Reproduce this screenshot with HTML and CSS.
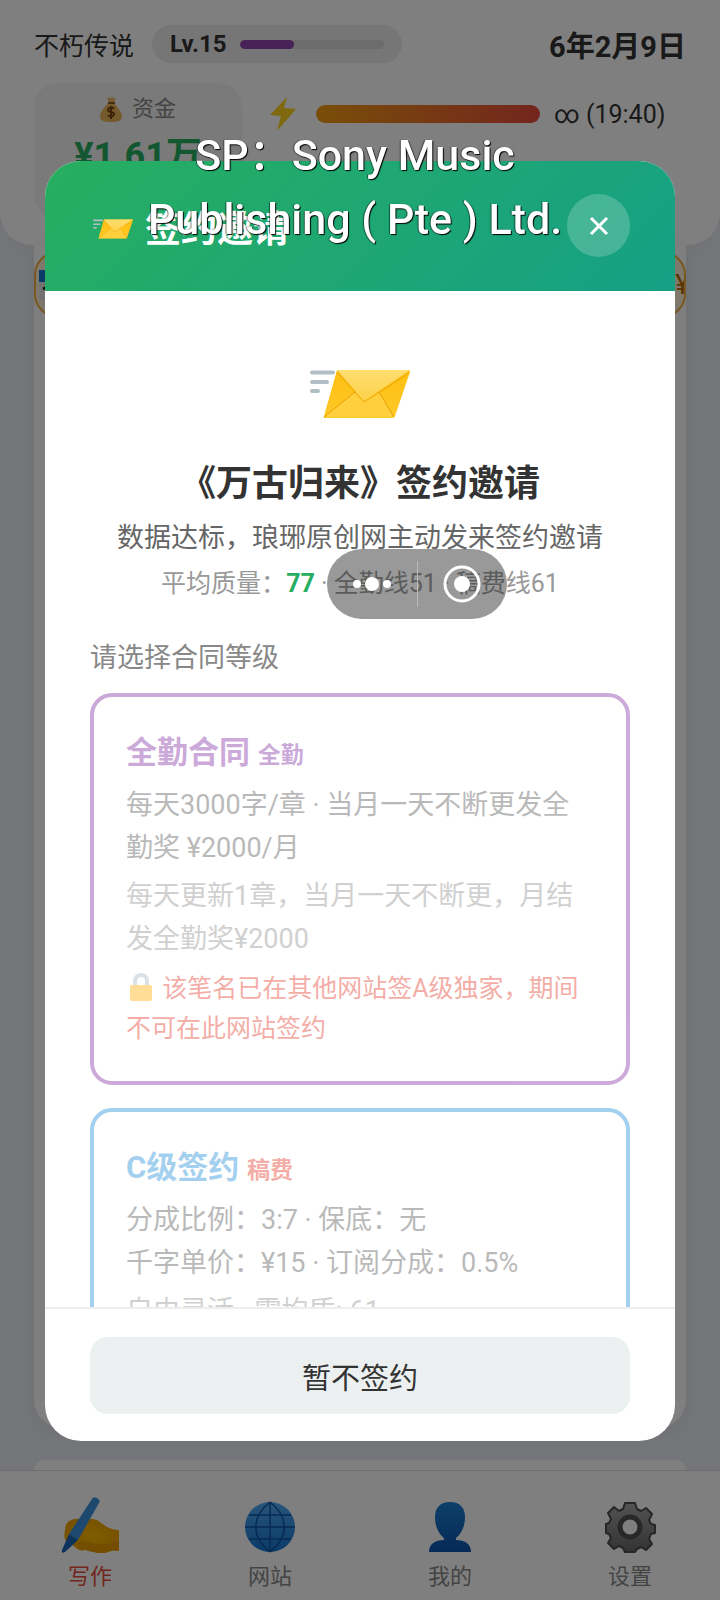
FILE: index.html
```
<!DOCTYPE html>
<html lang="zh-CN">
<head>
    <meta charset="UTF-8">
    <meta name="viewport" content="width=device-width, initial-scale=1.0">
    <title>签约邀请</title>
    <link rel="stylesheet" href="styles.css">
</head>
<body>
    <svg class="defs" aria-hidden="true">
        <defs>
            <linearGradient id="flap" x1="0" y1="0" x2="0" y2="1">
                <stop offset="0" stop-color="#ffdf70"/>
                <stop offset="1" stop-color="#fdd04a"/>
            </linearGradient>
            <linearGradient id="paper" x1="0" y1="0" x2="0" y2="1">
                <stop offset="0" stop-color="#fdbf12"/>
                <stop offset="1" stop-color="#ffc928"/>
            </linearGradient>
            <linearGradient id="globe" x1="0" y1="0" x2="0" y2="1">
                <stop offset="0" stop-color="#50aaf5"/>
                <stop offset="1" stop-color="#1576d2"/>
            </linearGradient>
            <linearGradient id="person" x1="0" y1="0" x2="0" y2="1">
                <stop offset="0" stop-color="#1c80d4"/>
                <stop offset="1" stop-color="#0c54ae"/>
            </linearGradient>
            <linearGradient id="gear" x1="0" y1="0" x2="0" y2="1">
                <stop offset="0" stop-color="#a6a6a6"/>
                <stop offset="1" stop-color="#686868"/>
            </linearGradient>
            <radialGradient id="hand">
                <stop offset="0" stop-color="#ffb900"/>
                <stop offset="1" stop-color="#f0a400"/>
            </radialGradient>
            <symbol id="envelope" viewBox="0 0 100 50">
                <path d="M2 3.5h21M2 13h15M2 22h6" stroke="#b0bec5" stroke-width="4" stroke-linecap="round"/>
                <path d="M27 1h72q1 0 1 2L85 47q-1 2-2 2H15q-2 0-1-2z" fill="url(#paper)"/>
                <path d="M14 48l31-25 10 7 14-7 15 25z" fill="#ffcf3d"/>
                <path d="M14 48l31-25M69 23l15 25" stroke="#e5a000" fill="none"/>
                <path d="M27 1h73L54 32z" fill="url(#flap)"/>
                <path d="M27 3l27 30L99 4" stroke="#eda500" fill="none"/>
            </symbol>
        </defs>
    </svg>

    <div class="app">
        <header class="status">
            <div class="status-row">
                <span class="rank">不朽传说</span>
                <div class="level">
                    <b>Lv.15</b>
                    <div class="level-bar"><div class="level-fill"></div></div>
                </div>
                <span class="date">6年2月9日</span>
            </div>
            <div class="stats">
                <div class="money">
                    <div class="money-label">
                        <svg class="bag-icon" viewBox="0 0 22 26">
                            <path d="M7 1l3 1 2-1 2 1 2-1-2 6H9z" fill="#e9b866"/>
                            <path d="M8 7h6c3 4 8 9 8 13 0 5-4 6-11 6S0 25 0 20C0 16 5 11 8 7z" fill="#eab55c"/>
                            <path d="M8 7h7" stroke="#8a5a20" stroke-width="2"/>
                            <path d="M14 13c-1-2-6-2-6 1s6 1 6 4-5 3-6 1M11 10v13" fill="none" stroke="#7b4712" stroke-width="2"/>
                        </svg>
                        资金
                    </div>
                    <div class="money-value">¥1.61万</div>
                </div>
                <div class="energy">
                    <svg class="bolt-icon" viewBox="0 0 26 34"><path d="M17 0L0 18l11 1L7 34 26 12l-12-1z" fill="#fdd21c"/></svg>
                    <div class="energy-bar"></div>
                    <span>∞ (19:40)</span>
                </div>
            </div>
        </header>
        <main class="work">
            <div class="notice">
                <svg class="calendar-icon" viewBox="0 0 30 30">
                    <path d="M0 0h30v30H0z" fill="#e4e4e8"/>
                    <path d="M0 0h30v12H0z" fill="#1976d2"/>
                    <path d="M4 19l4-2v10" stroke="#222" stroke-width="3" fill="none"/>
                </svg>
                <span>¥</span>
            </div>
        </main>
        <section class="next"></section>
        <nav class="tabs">
            <button class="tab active">
                <svg viewBox="0 0 58 58">
                    <path d="M4 34c0-7 4-10 10-11 8-1 15-1 22 1l10 7c4 2 8 3 12 3v21c-8-2-10 2-17 2-8 0-11-2-17-3-7 2-9-3-13-5C5 47 2 43 4 34z" fill="url(#hand)"/>
                    <path d="M15 47c8-4 14 0 23 1s12-2 20-3v10c-8-2-10 2-17 2-8 0-11-2-17-3-5 1-7-3-9-7z" fill="#db8e00" opacity=".5"/>
                    <path d="M31 3q1-3 5-1t2 5L17 44l-9-6z" fill="#3b93dd"/>
                    <path d="M8 38l9 6L4 56q-4 2-3-2z" fill="#1766b8"/>
                </svg>
                写作
            </button>
            <button class="tab">
                <svg viewBox="0 0 58 58">
                    <circle cx="29" cy="31" r="25" fill="url(#globe)"/>
                    <path d="M29 6v50M4 31h50M8 19h42M8 43h42M29 6c-19 15-19 35 0 50M29 6c19 15 19 35 0 50" fill="none" stroke="#0f55a5" stroke-width="1.5"/>
                </svg>
                网站
            </button>
            <button class="tab">
                <svg viewBox="0 0 58 58">
                    <path d="M29 6c10 0 15 6 15 15 0 11-5 18-9 21v2c9 0 15 4 15 12H8c0-8 6-12 15-12v-2c-4-3-9-10-9-21 0-9 5-15 15-15z" fill="url(#person)"/>
                </svg>
                我的
            </button>
            <button class="tab">
                <svg viewBox="0 0 58 58">
                    <g fill="url(#gear)" stroke="#4c4c4c" stroke-width="2" stroke-linejoin="round">
                        <path fill-rule="evenodd" d="M24 7h10l2 6 4 2 5-3 6 6-3 6 2 4 4 1v8l-4 1-2 5 3 5-6 6-5-3-4 2-2 3H24l-2-4-4-2-5 3-6-6 3-5-2-4-3-1v-9l3-1 2-4-3-6 6-6 5 4 4-2zM29 22a9 9 0 1 0 0 18 9 9 0 0 0 0-18z"/>
                    </g>
                    <circle cx="29" cy="31" r="10" fill="none" stroke="#505050" stroke-width="5"/>
                </svg>
                设置
            </button>
        </nav>
    </div>

    <div class="overlay">
        <div class="modal" role="dialog" aria-labelledby="modal-title">
            <div class="modal-header">
                <h2 id="modal-title"><svg class="envelope-small"><use href="#envelope"/></svg>签约邀请</h2>
                <button class="close" aria-label="关闭">
                    <svg viewBox="0 0 20 20"><path d="M2 2l16 16M18 2L2 18" stroke="#fff" stroke-width="3"/></svg>
                </button>
            </div>
            <div class="modal-body">
                <svg class="envelope-large"><use href="#envelope"/></svg>
                <h3>《万古归来》签约邀请</h3>
                <p class="intro">数据达标，琅琊原创网主动发来签约邀请</p>
                <p class="quality">平均质量：<b>77</b> · 全勤线51 · 稿费线61</p>
                <p class="choose">请选择合同等级</p>

                <div class="contract full">
                    <h4>全勤合同 <small>全勤</small></h4>
                    <p class="terms">每天3000字/章 · 当月一天不断更发全勤奖 ¥2000/月</p>
                    <p class="desc">每天更新1章，当月一天不断更，月结发全勤奖¥2000</p>
                    <p class="locked">
                        <svg class="lock-icon" viewBox="0 0 22 28">
                            <path d="M5 14V8a6 6 0 0 1 12 0v6" fill="none" stroke="#b0bec5" stroke-width="4"/>
                            <rect y="12" width="22" height="16" rx="2" fill="#ffb618"/>
                        </svg>
                        该笔名已在其他网站签A级独家，期间不可在此网站签约
                    </p>
                </div>

                <div class="contract grade-c">
                    <h4>C级签约 <small>稿费</small></h4>
                    <p class="terms">分成比例：3:7 · 保底：无<br>千字单价：¥15 · 订阅分成：0.5%</p>
                    <p class="desc">自由灵活 · 需均质≥61</p>
                </div>
            </div>
            <div class="modal-footer">
                <button class="decline">暂不签约</button>
            </div>
        </div>
    </div>

    <div class="caption">SP：Sony Music<br>Publishing ( Pte ) Ltd.</div>

    <div class="capsule">
        <button aria-label="更多">
            <svg viewBox="0 0 38 38"><g fill="#fff"><circle cx="4" cy="19" r="4"/><circle cx="19" cy="19" r="7"/><circle cx="34" cy="19" r="4"/></g></svg>
        </button>
        <button aria-label="退出">
            <svg viewBox="0 0 38 38"><circle cx="19" cy="19" r="17" fill="none" stroke="#fff" stroke-width="3"/><circle cx="19" cy="19" r="8" fill="#fff"/></svg>
        </button>
    </div>
</body>
</html>
```
FILE: styles.css
```
* {
    box-sizing: border-box;
}

body {
    margin: 0;
    font-family: Roboto, "Noto Sans CJK SC", sans-serif;
    color: #333;
    background: #ebedf2;
}

h2, h3, h4, p {
    margin: 0;
}

button {
    font-family: inherit;
    border: none;
    cursor: pointer;
}

.defs {
    position: absolute;
    width: 0;
    height: 0;
}

/* Page behind the dialog */
.app {
    display: flex;
    flex-direction: column;
    height: 100vh;
    overflow: hidden;
}

.status {
    padding: 24px 34px 26px;
    background: #fff;
    border-radius: 0 0 32px 32px;
    box-shadow: 0 4px 20px rgba(0, 0, 0, 0.04);
}

.status-row {
    display: flex;
    align-items: center;
    gap: 18px;
    height: 40px;
    font-size: 24px;
}

.rank {
    font-size: 25px;
}

.level {
    display: flex;
    align-items: center;
    gap: 14px;
    height: 38px;
    padding: 0 18px;
    background: #ecedee;
    border-radius: 20px;
}

.level-bar {
    width: 144px;
    height: 9px;
    background: #d8d8d8;
    border-radius: 5px;
    overflow: hidden;
}

.level-fill {
    width: 37%;
    height: 100%;
    background: #8e44ad;
    border-radius: 5px;
}

.date {
    margin-left: auto;
    font-size: 29px;
    font-weight: bold;
}

.stats {
    display: flex;
    gap: 28px;
    margin-top: 19px;
}

.money {
    width: 208px;
    height: 136px;
    padding-top: 10px;
    background: #f5f5f5;
    border-radius: 24px;
    text-align: center;
}

.money-label {
    display: flex;
    justify-content: center;
    align-items: center;
    gap: 10px;
    font-size: 22px;
    line-height: 32px;
    color: #888;
}

.bag-icon {
    width: 22px;
    height: 26px;
}

.money-value {
    margin-top: 9px;
    font-size: 36px;
    font-weight: bold;
    line-height: 44px;
    color: #27ae60;
}

.energy {
    flex: 1;
    display: flex;
    align-items: center;
    gap: 14px;
    height: 62px;
    font-size: 25px;
}

.bolt-icon {
    width: 26px;
    height: 34px;
    margin-right: 6px;
}

.energy-bar {
    width: 224px;
    height: 18px;
    background: linear-gradient(90deg, #f39c12, #e74c3c);
    border-radius: 9px;
}

.work {
    flex: 1;
    margin: 0 34px;
    padding-top: 6px;
    background: #fff;
    border-radius: 0 0 28px 28px;
    box-shadow: 0 4px 24px rgba(0, 0, 0, 0.08);
}

.notice {
    display: flex;
    justify-content: space-between;
    align-items: center;
    height: 67px;
    padding: 0 0 0 3px;
    background: #fff0d8;
    border: 2px solid #f0b040;
    border-radius: 24px;
    font-size: 28px;
    color: #b26a00;
    overflow: hidden;
}

.notice span {
    margin-right: -6px;
}

.calendar-icon {
    width: 30px;
    height: 30px;
}

.next {
    height: 10px;
    margin: 32px 34px 0;
    background: #fff;
    border-radius: 28px 28px 0 0;
}

.tabs {
    display: flex;
    height: 130px;
    background: #fff;
    border-top: 1px solid #ddd;
}

.tab {
    flex: 1;
    display: flex;
    flex-direction: column;
    align-items: center;
    padding: 25px 0 0;
    background: none;
    font-size: 22px;
    line-height: 34px;
    color: #888;
}

.tab svg {
    width: 58px;
    height: 58px;
    margin-bottom: 6px;
}

.tab.active {
    color: #e74c3c;
}

/* Dialog */
.overlay {
    position: fixed;
    inset: 0;
    display: flex;
    justify-content: center;
    align-items: center;
    padding: 47px 45px 45px;
    background: rgba(0, 0, 0, 0.5);
}

.modal {
    display: flex;
    flex-direction: column;
    width: 100%;
    height: 80vh;
    background: #fff;
    border-radius: 36px;
    overflow: hidden;
}

.modal-header {
    display: flex;
    justify-content: space-between;
    align-items: center;
    padding: 33px 45px 34px;
    background: linear-gradient(135deg, #27ae60, #16a085);
}

.modal-header h2 {
    display: flex;
    align-items: center;
    gap: 12px;
    font-size: 36px;
    color: #fff;
}

.envelope-small {
    width: 40px;
    height: 20px;
    margin: 6px 0 0 3px;
}

.close {
    display: flex;
    justify-content: center;
    align-items: center;
    width: 63px;
    height: 63px;
    padding: 0;
    background: rgba(255, 255, 255, 0.2);
    border-radius: 50%;
}

.close svg {
    width: 20px;
    height: 20px;
}

.modal-body {
    flex: 1;
    min-height: 0;
    padding: 78px 45px 0;
    text-align: center;
    overflow: hidden;
}

.envelope-large {
    display: block;
    width: 100px;
    height: 50px;
    margin: 0 auto 39px;
}

h3 {
    font-size: 36px;
    line-height: 52px;
    color: #333;
}

.intro {
    margin-top: 6px;
    font-size: 27px;
    line-height: 44px;
    color: #666;
}

.quality {
    margin-top: 4px;
    font-size: 25px;
    line-height: 40px;
    color: #999;
}

.quality b {
    color: #27ae60;
}

.choose {
    margin: 32px 0 13px;
    font-size: 27px;
    line-height: 44px;
    color: #888;
    text-align: left;
}

.contract {
    margin-bottom: 23px;
    padding: 32px;
    border: 4px solid;
    border-radius: 22px;
    text-align: left;
    opacity: 0.45;
}

.full {
    color: #8e44ad;
}

.grade-c {
    color: #3498db;
}

h4 {
    font-size: 31px;
    line-height: 48px;
}

h4 small {
    font-size: 23px;
}

.grade-c small {
    color: #e74c3c;
}

.terms, .desc {
    margin-top: 4px;
    font-size: 27px;
    line-height: 43px;
    color: #666;
}

.desc {
    margin-top: 5px;
    color: #999;
}

.locked {
    margin-top: 8px;
    font-size: 25px;
    line-height: 40px;
    color: #e74c3c;
}

.lock-icon {
    width: 22px;
    height: 28px;
    margin: 0 4px;
    vertical-align: -4px;
}

.modal-footer {
    padding: 28px 45px 27px;
    border-top: 2px solid #eee;
}

.decline {
    display: block;
    width: 100%;
    height: 77px;
    background: #ecf0f1;
    border-radius: 18px;
    font-size: 29px;
    color: #333;
}

/* Floating layers */
.caption {
    position: fixed;
    top: 123px;
    left: 0;
    width: 100%;
    padding-right: 10px;
    font-size: 43px;
    font-weight: 500;
    line-height: 64px;
    color: #fff;
    text-align: center;
    text-shadow: 1px 1px 1px #000, -1px 0 1px rgba(0, 0, 0, 0.5);
    pointer-events: none;
}

.capsule {
    position: fixed;
    top: 549px;
    left: 327px;
    display: flex;
    align-items: center;
    width: 180px;
    height: 70px;
    background: rgba(0, 0, 0, 0.4);
    border-radius: 35px;
}

.capsule button {
    flex: 1;
    display: flex;
    justify-content: center;
    align-items: center;
    height: 46px;
    padding: 0;
    background: none;
}

.capsule button + button {
    border-left: 1px solid #bbb;
}

.capsule svg {
    width: 38px;
    height: 38px;
}
```
